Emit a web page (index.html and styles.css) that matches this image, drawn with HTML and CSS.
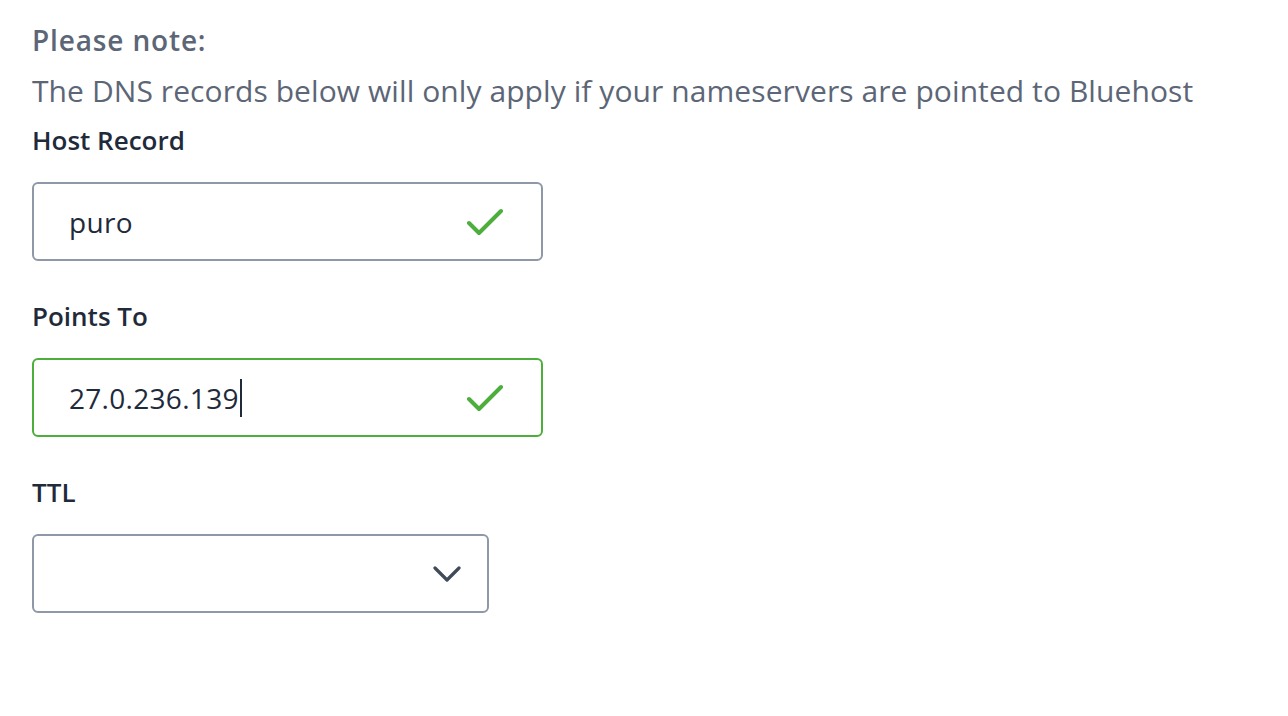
FILE: index.html
```html
<!DOCTYPE html>
<html>
<head>
<meta charset="utf-8">
<link rel="stylesheet" href="styles.css">
</head>
<body>
<div class="page">
  <div class="note-title">Please note:</div>
  <div class="note-text">The DNS records below will only apply if your nameservers are pointed to Bluehost</div>

  <div class="field">
    <label class="label">Host Record</label>
    <div class="input">
      <span class="value">puro</span>
      <svg class="check" viewBox="0 0 36 28" width="36" height="28"><path d="M2 15 L12 25 L34 3" fill="none" stroke="#4caf3c" stroke-width="4" stroke-linecap="round" stroke-linejoin="round"/></svg>
    </div>
  </div>

  <div class="field">
    <label class="label">Points To</label>
    <div class="input input-focus">
      <span class="value">27.0.236.139<span class="caret"></span></span>
      <svg class="check" viewBox="0 0 36 28" width="36" height="28"><path d="M2 15 L12 25 L34 3" fill="none" stroke="#4caf3c" stroke-width="4" stroke-linecap="round" stroke-linejoin="round"/></svg>
    </div>
  </div>

  <div class="field">
    <label class="label">TTL</label>
    <div class="input select">
      <span class="value"></span>
      <svg class="chev" viewBox="0 0 28 18" width="28" height="18"><path d="M2 3 L14 15 L26 3" fill="none" stroke="#404a59" stroke-width="3.2" stroke-linecap="round" stroke-linejoin="round"/></svg>
    </div>
  </div>
</div>
</body>
</html>
```
FILE: styles.css
```css
html, body {
  margin: 0;
  padding: 0;
  background: #ffffff;
}
body {
  font-family: "Open Sans", "Lato", sans-serif;
}
.page {
  padding: 20px 0 0 32px;
}
.note-title {
  font-size: 28px;
  font-weight: 600;
  letter-spacing: 0.85px;
  color: #5c6676;
  line-height: 40px;
}
.note-text {
  font-size: 30px;
  letter-spacing: 0.08px;
  color: #5c6676;
  line-height: 42px;
  margin-top: 10px;
}
.field {
  display: flex;
  flex-direction: column;
}
.label {
  font-size: 26px;
  font-weight: 600;
  color: #1f2a3b;
  line-height: 34px;
  margin-top: 11px;
}
.field + .field .label {
  margin-top: 38px;
}
.input {
  margin-top: 25px;
  width: 511px;
  height: 79px;
  box-sizing: border-box;
  border: 2px solid #8e98a8;
  border-radius: 6px;
  display: flex;
  align-items: center;
  justify-content: space-between;
  padding: 0 38px 0 35px;
}
.input-focus {
  border-color: #4caf3c;
}
.select {
  width: 457px;
  padding-right: 26px;
}
.value {
  font-size: 28px;
  letter-spacing: 0.3px;
  color: #1f2a3b;
  display: flex;
  align-items: center;
}
.caret {
  display: inline-block;
  width: 2px;
  height: 38px;
  background: #1f2a3b;
  margin-left: 1px;
}
.check {
  display: block;
}
.chev {
  display: block;
}
```
